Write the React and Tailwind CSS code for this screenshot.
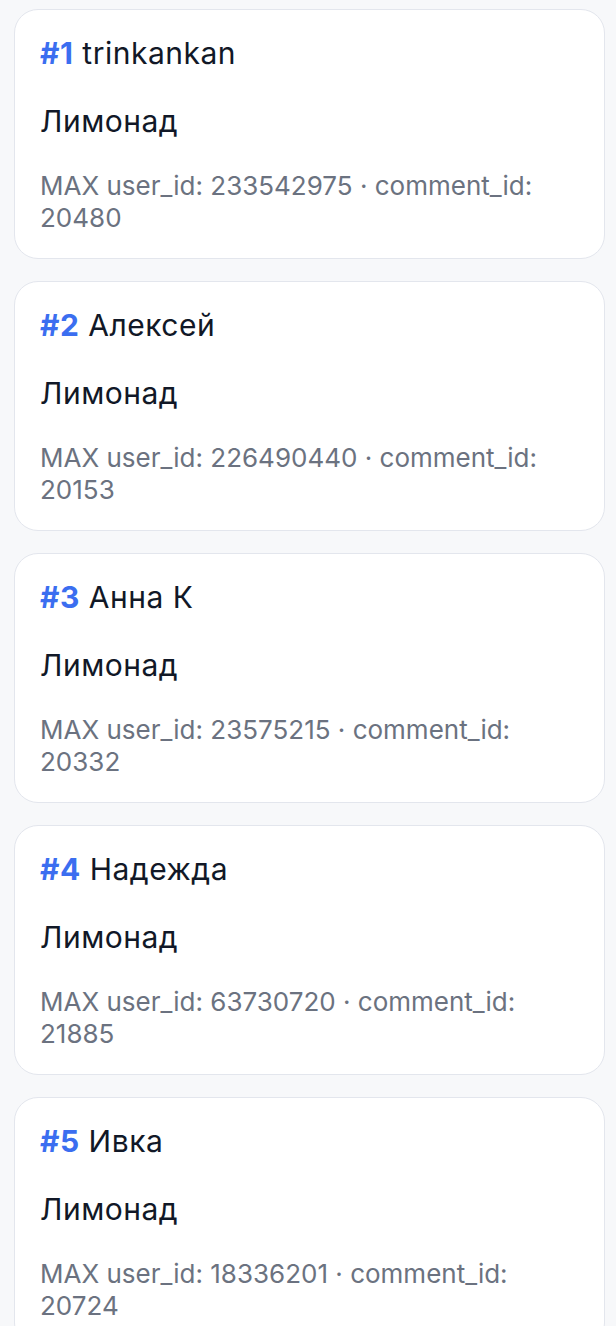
const entries = [
  { rank: 1, name: "trinkankan", item: "Лимонад", userId: "233542975", commentId: "20480" },
  { rank: 2, name: "Алексей", item: "Лимонад", userId: "226490440", commentId: "20153" },
  { rank: 3, name: "Анна К", item: "Лимонад", userId: "23575215", commentId: "20332" },
  { rank: 4, name: "Надежда", item: "Лимонад", userId: "63730720", commentId: "21885" },
  { rank: 5, name: "Ивка", item: "Лимонад", userId: "18336201", commentId: "20724" },
];

function WinnerCard({ entry }) {
  return (
    <div className="bg-white border border-[#e3e6ed] rounded-[24px] pt-[25px] pb-[24px] px-[25px]">
      <p className="text-[30px] leading-[36px] tracking-[0.5px] text-[#111827]">
        <span className="font-bold text-[#3b6ef0]">#{entry.rank}</span> {entry.name}
      </p>
      <p className="text-[30px] leading-[36px] tracking-[0.5px] text-[#111827] mt-[32px]">{entry.item}</p>
      <p className="text-[26px] leading-[32px] text-[#6b7280] mt-[31px]">
        MAX user_id: {entry.userId} · comment_id: {entry.commentId}
      </p>
    </div>
  );
}

export default function App() {
  return (
    <div className="min-h-screen bg-[#f7f8fa] pl-[14px] pr-[11px] pt-[9px] pb-6" style={{ fontFamily: "Inter, 'Noto Sans', sans-serif" }}>
      <div className="flex flex-col gap-[22px]">
        {entries.map((e) => (
          <WinnerCard key={e.rank} entry={e} />
        ))}
      </div>
    </div>
  );
}
